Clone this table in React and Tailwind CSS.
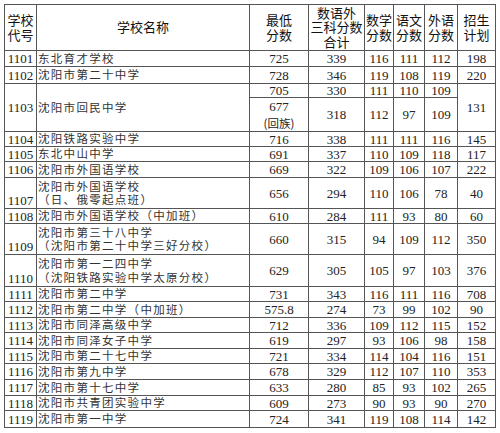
import React from 'react';

const serif = { fontFamily: '"Liberation Serif", "Noto Sans CJK SC", serif' };

const rows = [
  { code: '1101', name: ['东北育才学校'], v: ['725', '339', '116', '111', '112', '198'] },
  { code: '1102', name: ['沈阳市第二十中学'], v: ['728', '346', '119', '108', '119', '220'] },
  { code: '1103', special: true },
  { code: '1104', name: ['沈阳铁路实验中学'], v: ['716', '338', '111', '111', '116', '145'] },
  { code: '1105', name: ['东北中山中学'], v: ['691', '337', '110', '109', '118', '117'] },
  { code: '1106', name: ['沈阳市外国语学校'], v: ['669', '322', '109', '106', '107', '222'] },
  { code: '1107', name: ['沈阳市外国语学校', '（日、俄零起点班）'], v: ['656', '294', '110', '106', '78', '40'] },
  { code: '1108', name: ['沈阳市外国语学校（中加班）'], v: ['610', '284', '111', '93', '80', '60'] },
  { code: '1109', name: ['沈阳市第三十八中学', '（沈阳市第二十中学三好分校）'], v: ['660', '315', '94', '109', '112', '350'] },
  { code: '1110', name: ['沈阳市第一二四中学', '（沈阳铁路实验中学太原分校）'], v: ['629', '305', '105', '97', '103', '376'] },
  { code: '1111', name: ['沈阳市第二中学'], v: ['731', '343', '116', '111', '116', '708'] },
  { code: '1112', name: ['沈阳市第二中学（中加班）'], v: ['575.8', '274', '73', '99', '102', '90'] },
  { code: '1113', name: ['沈阳市同泽高级中学'], v: ['712', '336', '109', '112', '115', '152'] },
  { code: '1114', name: ['沈阳市同泽女子中学'], v: ['619', '297', '93', '106', '98', '158'] },
  { code: '1115', name: ['沈阳市第二十七中学'], v: ['721', '334', '114', '104', '116', '151'] },
  { code: '1116', name: ['沈阳市第九中学'], v: ['678', '329', '112', '107', '110', '353'] },
  { code: '1117', name: ['沈阳市第十七中学'], v: ['633', '280', '85', '93', '102', '265'] },
  { code: '1118', name: ['沈阳市共青团实验中学'], v: ['609', '273', '90', '93', '90', '270'] },
  { code: '1119', name: ['沈阳市第一中学'], v: ['724', '341', '119', '108', '114', '142'] },
];

const heads = [['学校', '代号'], ['学校名称'], ['最低', '分数'], ['数语外', '三科分数', '合计'], ['数学', '分数'], ['语文', '分数'], ['外语', '分数'], ['招生', '计划']];

function Num({ children, className = '' }) {
  return (
    <div className={`bg-white flex items-center justify-center text-[13px] leading-[13px] text-[#222] ${className}`} style={serif}>
      {children}
    </div>
  );
}

function Name({ lines, className = '' }) {
  return (
    <div className={`bg-white flex flex-col justify-center pl-[1px] text-[11.5px] leading-[13.5px] tracking-[1.3px] text-[#333] whitespace-nowrap ${className}`} style={{ fontFamily: '"Noto Sans CJK SC", sans-serif' }}>
      {lines.map(l => <span key={l}>{l}</span>)}
    </div>
  );
}

export default function App() {
  return (
    <div className="w-[500px] h-[433px] bg-white overflow-hidden pt-[4px] pl-[4px]">
      <div className="grid w-fit bg-[#555] p-px gap-px grid-cols-[31px_212px_58px_55px_28px_30px_32px_37px] grid-rows-[45px_15px_16px_13px_33px_14px_14px_15px_30px_14px_30px_31px_14px_15px_14px_15px_14px_15px_15px_14px_16px]">
        {heads.map((h, i) => (
          <div key={i} className="bg-white flex flex-col items-center justify-center text-[13px] leading-[14.5px] text-[#111] whitespace-nowrap" style={{ fontFamily: '"Noto Sans CJK SC", sans-serif' }}>
            {h.map(t => <span key={t}>{t}</span>)}
          </div>
        ))}
        {rows.map(r => {
          if (r.special) {
            return (
              <React.Fragment key={r.code}>
                <Num className="row-span-2">{r.code}</Num>
                <Name className="row-span-2" lines={['沈阳市回民中学']} />
                <Num>705</Num>
                <Num>330</Num>
                <Num>111</Num>
                <Num>110</Num>
                <Num>109</Num>
                <Num className="row-span-2">131</Num>
                <div className="bg-white flex flex-col items-center justify-center text-[13px] leading-[16px] text-[#222]" style={serif}>
                  <span>677</span>
                  <span className="text-[11.5px]" style={{ fontFamily: '"Noto Sans CJK SC", sans-serif' }}>(回族)</span>
                </div>
                <Num>318</Num>
                <Num>112</Num>
                <Num>97</Num>
                <Num>109</Num>
              </React.Fragment>
            );
          }
          const two = r.name.length > 1;
          return (
            <React.Fragment key={r.code}>
              <Num className={two ? 'items-end pb-[1px]' : ''}>{r.code}</Num>
              <Name lines={r.name} />
              {r.v.map((v, i) => <Num key={i}>{v}</Num>)}
            </React.Fragment>
          );
        })}
      </div>
    </div>
  );
}
